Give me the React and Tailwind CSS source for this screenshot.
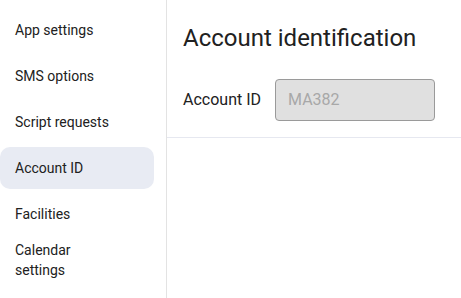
import React from "react";

const ITEMS = [
  "App settings",
  "SMS options",
  "Script requests",
  "Account ID",
  "Facilities",
  "Calendar settings",
];

export default function App() {
  return (
    <div
      className="flex h-[298px] w-[461px] overflow-hidden bg-white text-[#212121]"
      style={{ fontFamily: "Roboto, 'Liberation Sans', sans-serif" }}
    >
      {/* sidebar */}
      <aside className="flex w-[167px] shrink-0 flex-col gap-1 border-r border-[#e3e3e3] pr-3 pt-[9px]">
        {ITEMS.map((label) => (
          <div
            key={label}
            className={
              label === "Account ID"
                ? "flex h-[42px] shrink-0 items-center rounded-[10px] bg-[#e8ebf3] px-[15px] text-[14px] leading-5"
                : "flex h-[42px] shrink-0 items-center rounded-[10px] px-[15px] text-[14px] leading-5"
            }
          >
            <span className="block w-[100px]">{label}</span>
          </div>
        ))}
      </aside>

      {/* main */}
      <main className="flex-1">
        <div className="border-b border-[#e6e8f0] pb-4 pl-4 pt-[22px]">
          <h1 className="text-[24px] leading-8 font-normal">Account identification</h1>
          <div className="mt-[25px] flex items-center gap-[14px]">
            <span className="text-[16px] leading-5">Account ID</span>
            <div className="flex h-[42px] w-[160px] items-center rounded-[4px] border border-[#9a9a9a] bg-[#e0e0e0] px-3 text-[16px] text-[#a8a8a8]">
              MA382
            </div>
          </div>
        </div>
      </main>
    </div>
  );
}
